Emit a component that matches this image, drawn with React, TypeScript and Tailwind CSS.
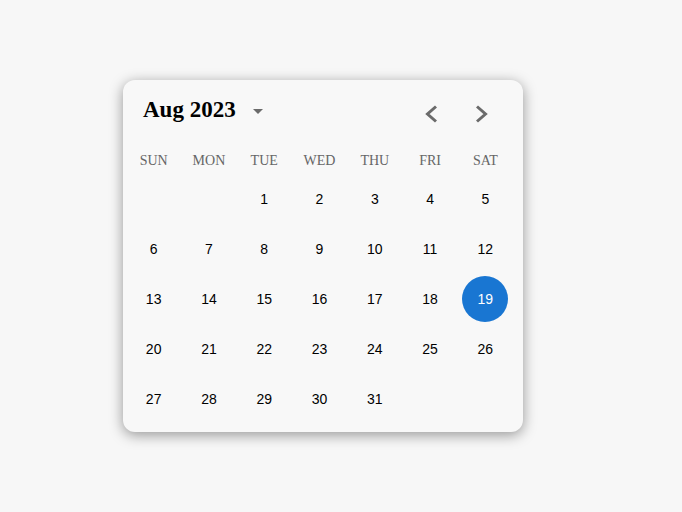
const days = ["SUN", "MON", "TUE", "WED", "THU", "FRI", "SAT"];

function Chevron({ dir }: { dir: "left" | "right" }) {
  return (
    <svg viewBox="0 0 16 20" className="h-[20px] w-[16px]" fill="none" stroke="#6b6b6b" strokeWidth={3}>
      <polyline points={dir === "left" ? "13,2.5 4.5,10 13,17.5" : "3,2.5 11.5,10 3,17.5"} />
    </svg>
  );
}

export default function App() {
  const cells: (number | null)[] = [null, null];
  for (let d = 1; d <= 31; d++) cells.push(d);
  const selected = 19;

  return (
    <div className="h-[512px] w-[682px] bg-[#f7f7f7] pl-[123px] pt-[80px]" style={{ fontFamily: '"Liberation Sans", Arial, sans-serif' }}>
      <div className="h-[352px] w-[400px] rounded-[12px] bg-[#f8f8f8] shadow-[0_3px_14px_rgba(0,0,0,0.4)]">
        <div className="flex h-[66px] items-center pl-[20px]">
          <div className="flex items-center pb-[5px]">
            <span className="text-[23px] font-bold text-black" style={{ fontFamily: '"Liberation Serif", "Times New Roman", serif' }}>
              Aug 2023
            </span>
            <svg viewBox="0 0 24 24" className="ml-[10px] h-6 w-6" fill="#6b6b6b">
              <path d="M7 10l5 5 5-5z" />
            </svg>
          </div>
          <div className="ml-auto mr-[33px] flex items-center gap-[35px] pt-[1px]">
            <button className="flex items-center justify-center"><Chevron dir="left" /></button>
            <button className="flex items-center justify-center"><Chevron dir="right" /></button>
          </div>
        </div>
        <div className="ml-[3px] grid w-[387px] grid-cols-7">
          {days.map((d) => (
            <div key={d} className="flex h-[28px] items-center justify-center text-[14px] text-[#666]" style={{ fontFamily: '"Liberation Serif", "Times New Roman", serif' }}>
              {d}
            </div>
          ))}
          {cells.map((c, i) => (
            <div key={i} className="flex h-[50px] items-center justify-center">
              {c !== null && (
                <div className={`flex h-[46px] w-[46px] items-center justify-center rounded-full text-[14px] ${c === selected ? "bg-[#1976d2] text-white" : "text-black"}`}>
                  {c}
                </div>
              )}
            </div>
          ))}
        </div>
      </div>
    </div>
  );
}
